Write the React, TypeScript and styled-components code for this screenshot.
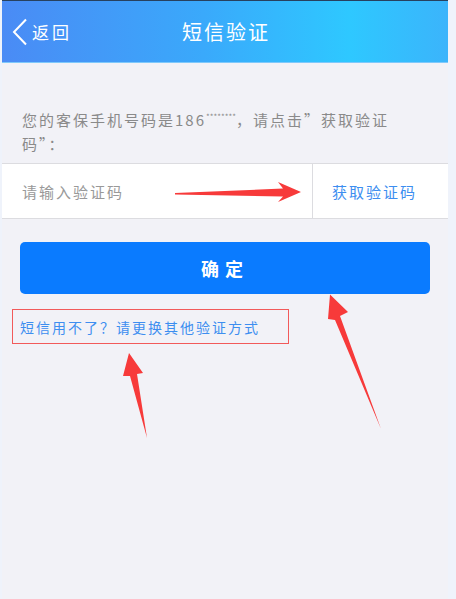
import React from "react";
import styled, { createGlobalStyle } from "styled-components";

const GlobalStyle = createGlobalStyle`
  html, body {
    margin: 0;
    padding: 0;
    background: #eff3fb;
  }
  body {
    font-family: "Noto Sans CJK SC", "Noto Sans", sans-serif;
  }
`;

const Page = styled.div`
  position: relative;
  width: 456px;
  height: 599px;
  overflow: hidden;
`;

const Frame = styled.div`
  margin-left: 2px;
  width: 446px;
  height: 599px;
  background: #f2f2f7;
  border-top: 1px solid #27415f;
  box-sizing: border-box;
`;

const Header = styled.header`
  height: 61px;
  display: flex;
  align-items: center;
  position: relative;
  background: linear-gradient(90deg, #4a8bf5 0%, #3aa9fb 45%, #2ec8ff 78%, #3bb4fb 100%);
  border-bottom: 1px solid #7fc9fb;
  color: #fff;
`;

const BackButton = styled.div`
  display: flex;
  align-items: center;
  gap: 4px;
  padding-left: 10px;
  font-size: 17px;
  letter-spacing: 3px;
  z-index: 1;
  svg {
    display: block;
  }
`;

const Title = styled.h1`
  position: absolute;
  left: 0;
  right: 0;
  margin: 0;
  text-align: center;
  font-size: 20px;
  font-weight: 400;
  letter-spacing: 2px;
  padding-left: 2px;
  line-height: 1;
`;

const Content = styled.main`
  padding-top: 45px;
`;

const Notice = styled.p`
  margin: 0;
  padding: 0 22px 0 20px;
  font-size: 15px;
  line-height: 24px;
  letter-spacing: 2px;
  color: #8a8a8a;
`;

const Stars = styled.span`
  position: relative;
  top: -6px;
  font-size: 8px;
  line-height: 0;
  letter-spacing: 0;
`;

const CodeRow = styled.div`
  margin-top: 7px;
  height: 54px;
  display: flex;
  background: #fff;
  border-top: 1px solid #dcdce0;
  border-bottom: 1px solid #dcdce0;
`;

const CodeInput = styled.input`
  flex: 1;
  min-width: 0;
  border: none;
  outline: none;
  background: transparent;
  padding: 0 0 0 20px;
  font-family: inherit;
  font-size: 15px;
  letter-spacing: 2px;
  color: #333;
  &::placeholder {
    color: #999;
  }
`;

const SendCode = styled.button`
  width: 136px;
  border: none;
  border-left: 1px solid #dcdce0;
  background: transparent;
  padding: 0 12px 0 0;
  font-family: inherit;
  font-size: 15px;
  letter-spacing: 2px;
  color: #3d8ef0;
`;

const Confirm = styled.button`
  display: block;
  margin: 23px auto 0;
  width: 410px;
  height: 52px;
  border: none;
  border-radius: 5px;
  background: #0a7bff;
  color: #fff;
  font-family: inherit;
  font-size: 18px;
  font-weight: 700;
  letter-spacing: 6px;
  padding-left: 6px;
`;

const LinkBox = styled.div`
  margin: 15px 0 0 10px;
  width: 277px;
  height: 35px;
  box-sizing: border-box;
  border: 1px solid #f25a5a;
  display: flex;
  align-items: center;
  padding-left: 7px;
`;

const SwitchLink = styled.a`
  font-size: 14px;
  letter-spacing: 2px;
  color: #3d8ef0;
  text-decoration: none;
  white-space: nowrap;
`;

const Annotations = styled.svg`
  position: absolute;
  left: 0;
  top: 0;
  pointer-events: none;
`;

export default function App() {
  return (
    <Page>
      <GlobalStyle />
      <Frame>
        <Header>
          <BackButton>
            <svg width="16" height="28" viewBox="0 0 16 28">
              <path d="M14 1.5 L2 14 L14 26.5" fill="none" stroke="#fff" strokeWidth="2" />
            </svg>
            <span>返回</span>
          </BackButton>
          <Title>短信验证</Title>
        </Header>
        <Content>
          <Notice>
            您的客保手机号码是186<Stars>********</Stars>，请点击”获取验证码”：
          </Notice>
          <CodeRow>
            <CodeInput placeholder="请输入验证码" />
            <SendCode>获取验证码</SendCode>
          </CodeRow>
          <Confirm>确定</Confirm>
          <LinkBox>
            <SwitchLink href="#">短信用不了？请更换其他验证方式</SwitchLink>
          </LinkBox>
        </Content>
      </Frame>
      <Annotations width="456" height="599" viewBox="0 0 456 599">
        <polygon
          fill="#f73a3a"
          points="175,193 283,188.5 278,182 301,192 278,202 283,196.5 175,194.5"
        />
        <polygon
          fill="#f73a3a"
          points="381,429 340,316 348,312 330,294.5 328,319 335,320"
        />
        <polygon
          fill="#f73a3a"
          points="147,438 137,374 143,373 129,353 123,376 130,376"
        />
      </Annotations>
    </Page>
  );
}
